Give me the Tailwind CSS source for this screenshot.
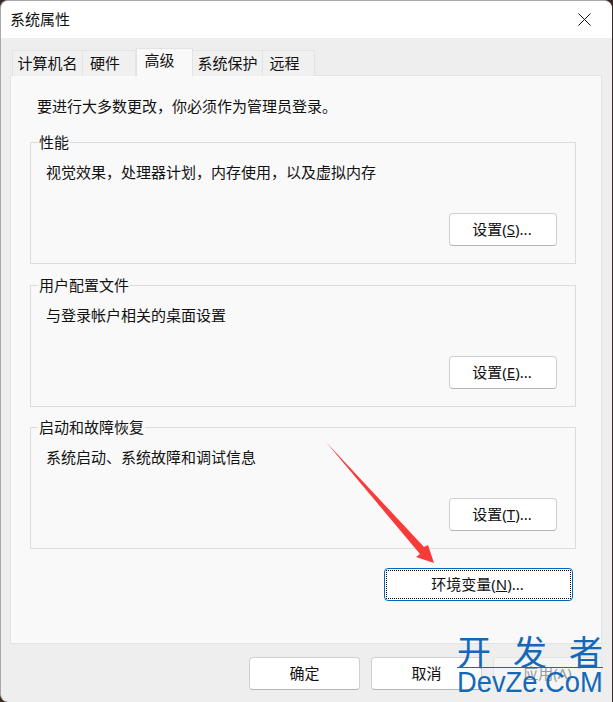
<!DOCTYPE html>
<html>
<head>
    <meta charset="utf-8">
    <title>系统属性</title>
    <script src="https://cdn.jsdelivr.net/npm/@tailwindcss/browser@4"></script>
</head>
<body class="bg-[#3a2a26] font-['Noto_Sans','Noto_Sans_CJK_SC',sans-serif] text-[15px] leading-[20px] text-[#111]">
<div class="relative w-[613px] h-[702px] overflow-hidden">
    <!-- dialog -->
    <div class="flex flex-col w-[612px] h-[702px] bg-[#eeeeee] border-t border-l border-[#a9a9a9] rounded-tl-[8px] rounded-tr-[8px] rounded-bl-[8px] overflow-hidden">
        <div class="flex items-center justify-between h-[37px] bg-white pl-[9px] pr-[21px] shrink-0">
            <span class="-mt-[1px]">系统属性</span>
            <svg width="13" height="13" viewBox="0 0 13 13" fill="none" stroke="#111" stroke-width="1"><path d="M0.5 0.5L12.5 12.5M12.5 0.5L0.5 12.5"/></svg>
        </div>
        <div class="flex flex-col px-[9px] pt-[10px]">
            <!-- tabs -->
            <div class="flex items-end h-[28px] pl-[2px] relative z-10 -mb-px">
                <div class="w-[71px] h-[26px] flex items-center justify-center border border-b-0 border-[#e3e3e3] bg-[#f0f0f0] pb-[2px]">计算机名</div>
                <div class="w-[53px] h-[26px] flex items-center justify-center border border-b-0 border-l-0 border-[#e3e3e3] bg-[#f0f0f0] pr-[8px] pb-[2px]">硬件</div>
                <div class="w-[57px] h-[28px] flex items-start justify-center pt-[1px] border border-b-0 border-[#e3e3e3] bg-[#f9f9f9] pr-[10px]">高级</div>
                <div class="w-[70px] h-[26px] flex items-center justify-center border border-b-0 border-l-0 border-[#e3e3e3] bg-[#f0f0f0] pb-[2px]">系统保护</div>
                <div class="w-[52px] h-[26px] flex items-center justify-center border border-b-0 border-l-0 border-[#e3e3e3] bg-[#f0f0f0] pr-[8px] pb-[2px]">远程</div>
            </div>
            <!-- panel -->
            <div class="flex flex-col h-[569px] w-[592px] border border-[#e3e3e3] bg-[#f9f9f9] pl-[19px] pr-[25px]">
                <p class="mt-[20px] pl-[7px]">要进行大多数更改，你必须作为管理员登录。</p>
                <div class="mt-[26px] h-[122px] border border-[#dcdcdc] flex flex-col">
                    <span class="block w-fit -mt-[11px] ml-[7px] px-px bg-[#f9f9f9]">性能</span>
                    <p class="mt-[10px] ml-[15px]">视觉效果，处理器计划，内存使用，以及虚拟内存</p>
                    <button class="self-end mt-[31px] mr-[18px] w-[108px] h-[33px] pb-[2px] pr-[2px] rounded-[4px] bg-white border border-[#d0d0d0] border-b-[#b4b4b4]">设置(<u>S</u>)...</button>
                </div>
                <div class="mt-[21px] h-[122px] border border-[#dcdcdc] flex flex-col">
                    <span class="block w-fit -mt-[11px] ml-[7px] px-px bg-[#f9f9f9]">用户配置文件</span>
                    <p class="mt-[10px] ml-[15px]">与登录帐户相关的桌面设置</p>
                    <button class="self-end mt-[31px] mr-[18px] w-[108px] h-[33px] pb-[2px] pr-[2px] rounded-[4px] bg-white border border-[#d0d0d0] border-b-[#b4b4b4]">设置(<u>E</u>)...</button>
                </div>
                <div class="mt-[20px] h-[122px] border border-[#dcdcdc] flex flex-col">
                    <span class="block w-fit -mt-[11px] ml-[7px] px-px bg-[#f9f9f9]">启动和故障恢复</span>
                    <p class="mt-[10px] ml-[15px]">系统启动、系统故障和调试信息</p>
                    <button class="self-end mt-[31px] mr-[18px] w-[108px] h-[33px] pb-[2px] pr-[2px] rounded-[4px] bg-white border border-[#d0d0d0] border-b-[#b4b4b4]">设置(<u>T</u>)...</button>
                </div>
                <div class="flex justify-end mt-[19px] mr-[3px]">
                    <button class="w-[189px] h-[33px] rounded-[4px] bg-white border border-[#0067c0] p-[1px]">
                        <span class="flex items-center justify-center w-full h-full pb-[1px] pr-[2px] border border-dotted border-black">环境变量(<u>N</u>)...</span>
                    </button>
                </div>
            </div>
            <!-- footer -->
            <div class="flex justify-end gap-[11px] mt-[13px] mr-[1px]">
                <button class="w-[111px] h-[33px] pb-[2px] rounded-[4px] bg-white border border-[#d0d0d0] border-b-[#b4b4b4]">确定</button>
                <button class="w-[111px] h-[33px] pb-[2px] rounded-[4px] bg-white border border-[#d0d0d0] border-b-[#b4b4b4]">取消</button>
                <button class="w-[109px] h-[33px] pb-[2px] rounded-[4px] bg-[#f5f5f5] border border-[#e3e3e3] text-[#9a9a9a]">应用(A)</button>
            </div>
        </div>
    </div>

    <!-- annotation arrow -->
    <svg class="absolute left-0 top-0 pointer-events-none" width="613" height="702" viewBox="0 0 613 702">
        <path d="M326 442L424 547L428 545L434 563L416 557L420 554Z" fill="#f83a3a"/>
    </svg>

    <!-- watermark -->
    <div class="absolute left-[457px] top-[634px] w-[146px] text-[#1369b8] pointer-events-none">
        <div class="flex justify-between h-[33px] text-[34px] leading-[33px] font-['Noto_Sans_CJK_SC',sans-serif]"><span>开</span><span>发</span><span>者</span></div>
        <div class="h-px bg-[#1369b8]"></div>
        <div class="-mt-[3px] text-[30px] leading-[34px] origin-left scale-x-[.91] font-['Liberation_Sans',sans-serif] whitespace-nowrap">DevZe.CoM</div>
    </div>
</div>
</body>
</html>
